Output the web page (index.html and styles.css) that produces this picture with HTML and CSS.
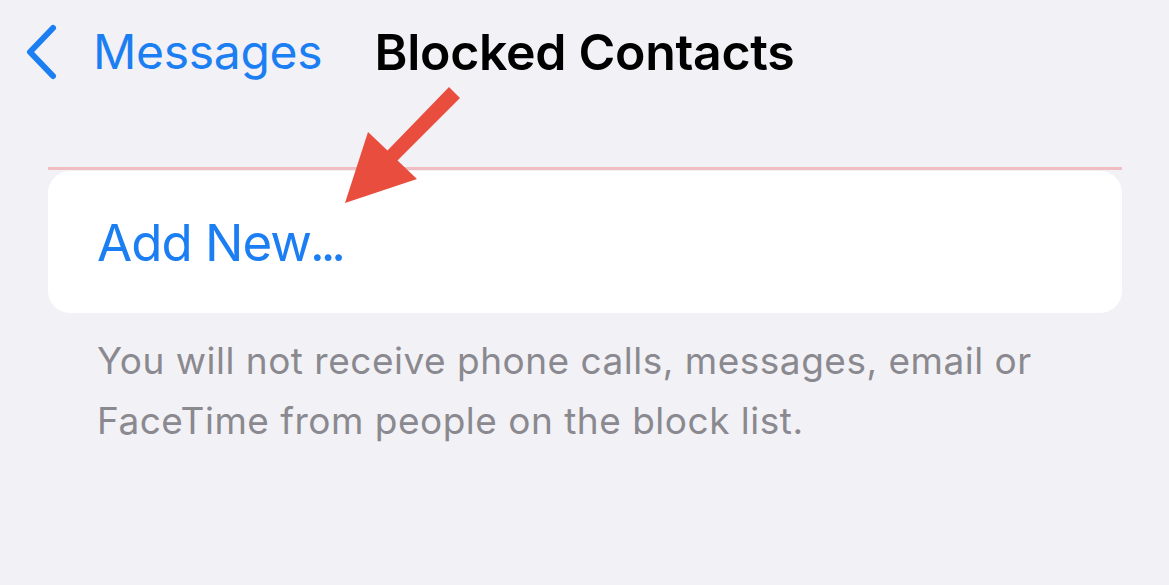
FILE: index.html
```html
<!DOCTYPE html>
<html lang="en">
<head>
<meta charset="utf-8">
<title>Blocked Contacts</title>
<link rel="stylesheet" href="styles.css">
</head>
<body>
<div class="screen">
  <header class="nav">
    <a class="back" href="#">
      <svg class="chevron" width="36" height="56" viewBox="0 0 36 56" aria-hidden="true">
        <path d="M31 4 L8 28 L31 52" fill="none" stroke="#1b7ef2" stroke-width="6" stroke-linecap="round" stroke-linejoin="round"/>
      </svg>
      <span class="back-label">Messages</span>
    </a>
    <h1 class="title">Blocked Contacts</h1>
    <div class="spacer"></div>
  </header>

  <main class="content">
    <div class="divider"></div>
    <div class="card">
      <span class="add-new">Add New<span class="dots">...</span></span>
    </div>
    <p class="footnote">You will not receive phone calls, messages, email or FaceTime from people on the block list.</p>
  </main>

  <svg class="arrow" width="1169" height="585" viewBox="0 0 1169 585" aria-hidden="true">
    <polygon points="449,87 460,98 397.5,160.4 417,179 345,203 368,132 387.5,150.6" fill="#e84d3d"/>
  </svg>
</div>
</body>
</html>
```

FILE: styles.css
```css
* { box-sizing: border-box; }

html, body {
  margin: 0;
  padding: 0;
  background: #f2f1f6;
}

body {
  font-family: Inter, "Noto Sans", "Liberation Sans", sans-serif;
  width: 1169px;
  height: 585px;
  overflow: hidden;
}

.screen {
  position: relative;
  width: 1169px;
  height: 585px;
}

.nav {
  display: grid;
  grid-template-columns: 1fr auto 1fr;
  align-items: center;
  height: 104px;
}

.back {
  display: flex;
  align-items: center;
  text-decoration: none;
  color: #1b7ef2;
  padding-left: 22px;
}

.chevron {
  display: block;
  margin-right: 35px;
}

.back-label {
  font-size: 48px;
  line-height: 1;
  letter-spacing: -0.3px;
}

.title {
  margin: 0;
  font-size: 50px;
  line-height: 1;
  font-weight: 600;
  color: #000;
  letter-spacing: -0.3px;
}

.content {
  padding: 63px 47px 0 48px;
}

.divider {
  height: 3px;
  background: #f0bec2;
  margin-bottom: 1px;
}

.card {
  background: #fff;
  border-radius: 22px;
  height: 142px;
  display: flex;
  align-items: center;
  padding-left: 49px;
}

.add-new {
  font-size: 51px;
  line-height: 1;
  color: #1b7ef2;
  letter-spacing: -1px;
}

.dots {
  letter-spacing: -4px;
  margin-left: -1px;
}

.footnote {
  margin: 18px 0 0 49px;
  font-size: 37px;
  line-height: 60px;
  color: #8a898f;
  letter-spacing: 0.5px;
  max-width: 1000px;
}

.arrow {
  position: absolute;
  left: 0;
  top: 0;
  pointer-events: none;
}
```
